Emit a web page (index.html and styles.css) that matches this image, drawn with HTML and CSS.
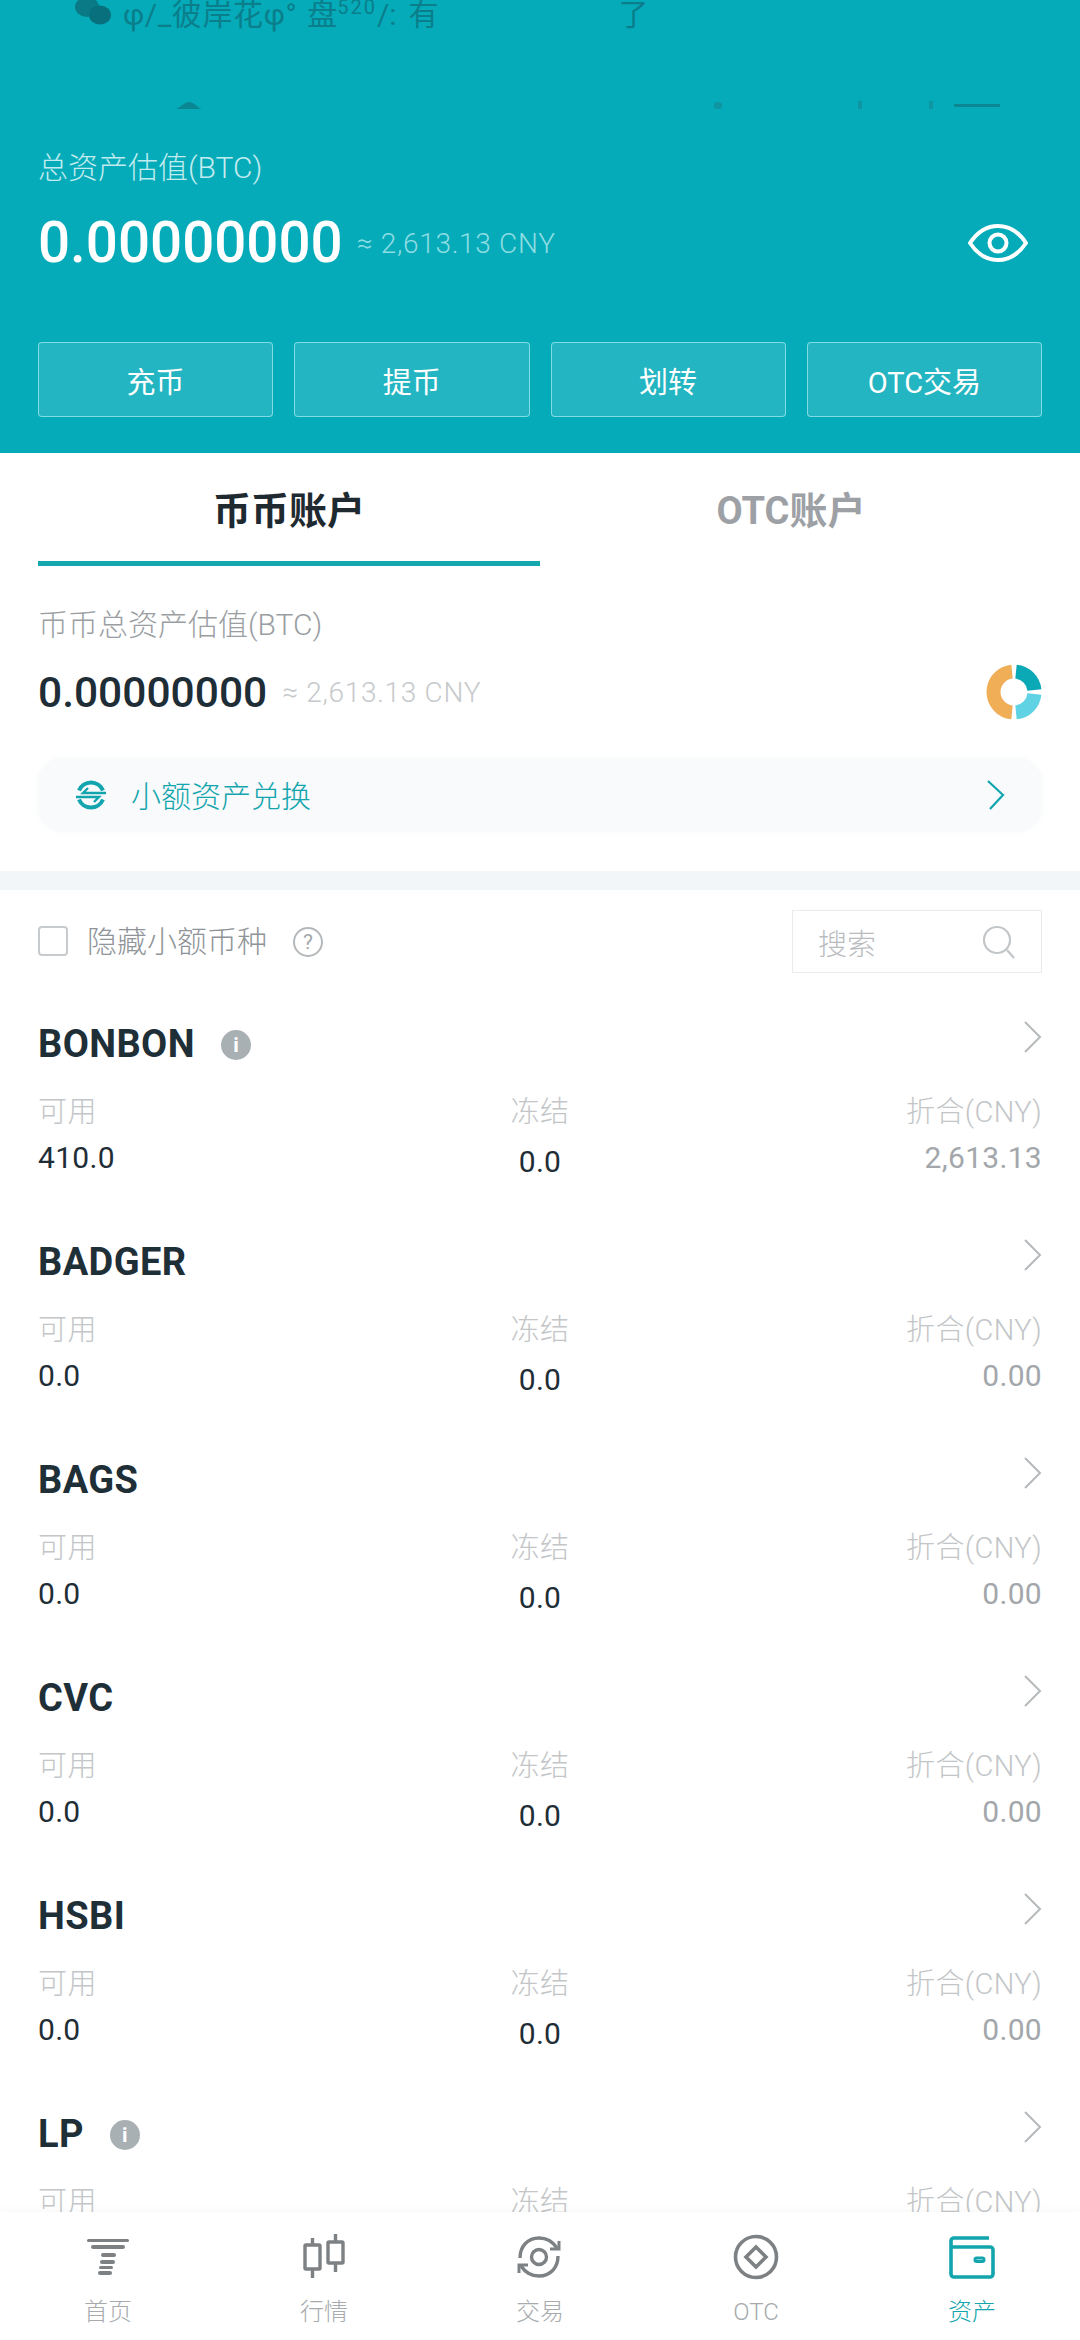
FILE: index.html
```html
<!DOCTYPE html>
<html lang="zh-CN">
<head>
  <meta charset="UTF-8">
  <meta name="viewport" content="width=device-width, initial-scale=1.0">
  <title>资产</title>
  <link rel="stylesheet" href="styles.css">
</head>
<body>
  <div class="app">
    <header class="top">
      <div class="notice">
        <svg class="wechat" width="38" height="26" viewBox="0 0 38 26">
          <ellipse cx="12" cy="7" rx="12" ry="10" fill="#0a7a86"/>
          <ellipse cx="25" cy="15" rx="11" ry="9.5" fill="#08707c"/>
        </svg>
        <span class="notice-a">φ/_彼岸花φ°</span>
        <span class="notice-b">盘<sup>520</sup>/:</span>
        <span class="notice-d">有</span>
        <span class="notice-c">了</span>
      </div>
      <svg class="smudge" width="1004" height="10" viewBox="0 0 1004 10">
        <path d="M138 9c4-1 8-7 13-7s9 6 13 7z" fill="#0b8794"/>
        <rect x="676" y="2" width="8" height="7" rx="3" fill="#0f95a2"/>
        <rect x="820" y="1" width="4" height="8" fill="#0f95a2"/>
        <rect x="891" y="1" width="4" height="8" fill="#0f95a2"/>
        <rect x="916" y="4" width="46" height="3" fill="#0b8794"/>
      </svg>
      <div class="top-label">总资产估值(BTC)</div>
      <div class="top-balance">
        <span class="top-amount">0.00000000</span>
        <span class="top-cny">≈ 2,613.13 CNY</span>
        <svg class="eye" width="62" height="40" viewBox="0 0 62 40" fill="none" stroke="#fff" stroke-width="4">
          <path d="M3 20C11 8 20 3 31 3s20 5 28 17c-8 12-17 17-28 17S11 32 3 20z" stroke-linejoin="round"/>
          <circle cx="31" cy="20" r="8.5"/>
        </svg>
      </div>
      <div class="actions">
        <a class="action">充币</a>
        <a class="action">提币</a>
        <a class="action">划转</a>
        <a class="action">OTC交易</a>
      </div>
    </header>

    <nav class="tabs">
      <div class="tab active">币币账户</div>
      <div class="tab">OTC账户</div>
    </nav>

    <section class="summary">
      <div class="summary-label">币币总资产估值(BTC)</div>
      <div class="summary-balance">
        <span class="summary-amount">0.00000000</span>
        <span class="summary-cny">≈ 2,613.13 CNY</span>
        <svg class="donut" width="56" height="56" viewBox="0 0 56 56" fill="none" stroke-width="14">
          <path d="M26 7.6A20.5 20.5 0 0 0 26 48.4" stroke="#f0ae57"/>
          <path d="M30 7.6A20.5 20.5 0 0 1 48.4 26" stroke="#0ba8b6"/>
          <path d="M48.4 30A20.5 20.5 0 0 1 30 48.4" stroke="#5fd3e3"/>
        </svg>
      </div>
      <div class="swap">
        <svg width="32" height="30" viewBox="0 0 32 30" fill="none" stroke="#12a5ad" stroke-width="4">
          <path d="M4 10.500A13 13 0 0 1 28 10.500"/>
          <path d="M4 19.500A13 13 0 0 0 28 19.500"/>
          <path d="M31 13H8l5-5M1 17h23l-5 5" stroke-width="2.4"/>
        </svg>
        <span class="swap-text">小额资产兑换</span>
        <svg class="swap-arrow" width="20" height="30" viewBox="0 0 20 30" fill="none" stroke="#12a5ad" stroke-width="2.2">
          <path d="M2 1l15 14L4 29"/>
        </svg>
      </div>
    </section>

    <div class="divider"></div>

    <section class="filter">
      <span class="check"></span>
      <span class="filter-text">隐藏小额币种</span>
      <span class="help">?</span>
      <div class="search">
        <span class="search-text">搜索</span>
        <svg width="34" height="34" viewBox="0 0 34 34" fill="none" stroke="#c3c6c8" stroke-width="2.2">
          <circle cx="15" cy="15" r="13"/>
          <path d="M25 25l7 8"/>
        </svg>
      </div>
    </section>

    <main class="coins" id="coins"></main>

    <footer class="tabbar">
      <div class="nav-item">
        <svg width="48" height="48" viewBox="0 0 48 48" fill="#7d8184">
          <rect x="3" y="6" width="42" height="3" rx="1.5"/>
          <rect x="7" y="12" width="34" height="4" rx="2"/>
          <rect x="17" y="20" width="15" height="4" rx="2"/>
          <rect x="16" y="27" width="15" height="4" rx="2"/>
          <rect x="15" y="33" width="14" height="3" rx="1.5"/>
          <rect x="14" y="38" width="14" height="4" rx="2"/>
        </svg>
        <span>首页</span>
      </div>
      <div class="nav-item">
        <svg width="48" height="48" viewBox="0 0 48 48" fill="none" stroke="#7d8184" stroke-width="3.4">
          <rect x="5" y="12" width="15" height="24" rx="1"/>
          <path d="M12.500 5v7M12.500 36v9"/>
          <rect x="28" y="9" width="15" height="21" rx="1"/>
          <path d="M35.500 1v8M35.500 30v9"/>
        </svg>
        <span>行情</span>
      </div>
      <div class="nav-item">
        <svg width="48" height="48" viewBox="0 0 48 48" fill="none" stroke="#7d8184" stroke-width="3.4">
          <circle cx="23" cy="24" r="7.500"/>
          <path d="M4 25C4 13 12 5 23 5c8 0 14 4 18 10"/>
          <path d="M42 23c0 12-8 20-19 20-8 0-14-4-18-10"/>
          <path d="M43 8v8h-9M3 40v-8h9" stroke-width="3"/>
        </svg>
        <span>交易</span>
      </div>
      <div class="nav-item">
        <svg width="48" height="48" viewBox="0 0 48 48" fill="none" stroke="#7d8184" stroke-width="3.6">
          <circle cx="24" cy="24" r="20.500"/>
          <path d="M24 14l10 10-10 10-10-10z"/>
        </svg>
        <span>OTC</span>
      </div>
      <div class="nav-item on">
        <svg width="48" height="48" viewBox="0 0 48 48" fill="none" stroke="#12a5ad" stroke-width="3.6">
          <path d="M41 5H6a3 3 0 0 0-3 3v33a3 3 0 0 0 3 3h36a3 3 0 0 0 3-3V17a3 3 0 0 0-3-3H3"/>
          <rect x="27" y="25" width="9" height="3.500" rx="1.700" stroke-width="3"/>
        </svg>
        <span>资产</span>
      </div>
    </footer>
  </div>

  <script src="coins.js"></script>
</body>
</html>
```

FILE: coins.js
```js
// the last row runs under the tab bar, only its labels show
const coins = [
  { name: 'BONBON', info: true, free: '410.0', frozen: '0.0', cny: '2,613.13' },
  { name: 'BADGER', free: '0.0', frozen: '0.0', cny: '0.00' },
  { name: 'BAGS', free: '0.0', frozen: '0.0', cny: '0.00' },
  { name: 'CVC', free: '0.0', frozen: '0.0', cny: '0.00' },
  { name: 'HSBI', free: '0.0', frozen: '0.0', cny: '0.00' },
  { name: 'LP', info: true, free: '', frozen: '', cny: '' }
];

document.getElementById('coins').innerHTML = coins.map(c => `
  <article class="coin">
    <div class="coin-head">
      <span class="coin-name">${c.name}</span>
      ${c.info ? '<span class="info">i</span>' : ''}
      <svg class="coin-arrow" width="20" height="32" viewBox="0 0 20 32" fill="none" stroke="#b6b9bb" stroke-width="2">
        <path d="M3 1l15 15L3 31"/>
      </svg>
    </div>
    <div class="stats">
      <div class="stat">
        <div class="stat-label">可用</div>
        <div class="stat-value">${c.free}</div>
      </div>
      <div class="stat middle">
        <div class="stat-label">冻结</div>
        <div class="stat-value">${c.frozen}</div>
      </div>
      <div class="stat right">
        <div class="stat-label">折合(CNY)</div>
        <div class="stat-value">${c.cny}</div>
      </div>
    </div>
  </article>
`).join('');
```

FILE: styles.css
```css
* {
  box-sizing: border-box;
}

body {
  margin: 0;
  font-family: Roboto, "Noto Sans CJK SC", sans-serif;
  background-color: #fff;
  color: #1f2d36;
}

.app {
  width: 1080px;
  height: 2340px;
  display: flex;
  flex-direction: column;
  overflow: hidden;
}

.top {
  height: 453px;
  flex: none;
  padding: 0 38px;
  background-color: #05abb9;
  color: #fff;
}

.notice {
  height: 34px;
  display: flex;
  align-items: flex-start;
  padding-left: 37px;
  font-size: 30px;
  line-height: 30px;
  color: #0b7e8b;
  white-space: nowrap;
}

.notice-a {
  margin-left: 10px;
  letter-spacing: 0.6px;
}

.notice-b {
  margin-left: 10px;
}

.notice-b sup {
  font-size: 20px;
  line-height: 0;
  letter-spacing: 2px;
}

.notice-d {
  margin-left: 12px;
}

.notice-c {
  margin-left: 180px;
}

.smudge {
  display: block;
  margin-top: 66px;
}

.top-label {
  margin-top: 39px;
  font-size: 30px;
  font-weight: 300;
  line-height: 38px;
  color: #c2ecef;
}

.top-balance {
  margin-top: 26px;
  height: 60px;
  display: flex;
  align-items: center;
}

.top-amount {
  font-size: 56.5px;
  font-weight: 500;
}

.top-cny {
  margin-left: 14px;
  font-size: 28px;
  font-weight: 300;
  letter-spacing: 0.7px;
  color: #8edde3;
}

.eye {
  margin-left: auto;
  margin-right: 13px;
}

.actions {
  margin-top: 69px;
  display: grid;
  grid-template-columns: repeat(4, 1fr);
  gap: 21px;
}

.action {
  height: 75px;
  display: flex;
  align-items: center;
  justify-content: center;
  background-color: rgba(255, 255, 255, 0.12);
  border: 1px solid rgba(170, 235, 240, 0.7);
  border-radius: 4px;
  font-size: 29px;
}

.tabs {
  height: 113px;
  flex: none;
  display: grid;
  grid-template-columns: 1fr 1fr;
  padding: 0 38px;
}

.tab {
  padding-top: 32px;
  text-align: center;
  font-size: 38px;
  font-weight: 700;
  line-height: 52px;
  color: #9da1a5;
}

.tab.active {
  color: #1f2a30;
  border-bottom: 5px solid #14a7ae;
}

.summary {
  height: 305px;
  flex: none;
  padding: 0 38px;
}

.summary-label {
  margin-top: 40px;
  font-size: 30px;
  font-weight: 300;
  line-height: 38px;
  color: #9a9ea2;
}

.summary-balance {
  height: 56px;
  margin-top: 20px;
  display: flex;
  align-items: center;
}

.summary-amount {
  font-size: 42.5px;
  font-weight: 500;
  color: #1f2d36;
}

.summary-cny {
  margin-left: 15px;
  font-size: 28px;
  font-weight: 300;
  letter-spacing: 0.7px;
  color: #c6c9cb;
}

.donut {
  margin-left: auto;
}

.swap {
  height: 74px;
  margin-top: 38px;
  display: flex;
  align-items: center;
  padding: 0 36px 0 37px;
  background-color: #f8fafc;
  border-radius: 24px;
  box-shadow: 0 0 8px #f8fafc;
}

.swap-text {
  margin-left: 24px;
  padding-bottom: 2px;
  font-size: 30px;
  font-weight: 300;
  color: #12a5ad;
}

.swap-arrow {
  margin-left: auto;
}

.divider {
  height: 19px;
  flex: none;
  background-color: #f3f6f8;
}

.filter {
  height: 87px;
  flex: none;
  display: flex;
  align-items: flex-start;
  padding: 20px 38px 0;
}

.check {
  width: 30px;
  height: 30px;
  margin-top: 16px;
  border: 2px solid #c8cbcd;
  border-radius: 4px;
}

.filter-text {
  margin: 12px 0 0 19px;
  font-size: 30px;
  font-weight: 300;
  line-height: 40px;
  color: #8f9498;
}

.help {
  width: 30px;
  height: 30px;
  margin: 17px 0 0 26px;
  border: 2px solid #b4b8ba;
  border-radius: 50%;
  text-align: center;
  font-size: 21px;
  line-height: 26px;
  color: #a4a8ab;
}

.search {
  width: 250px;
  height: 63px;
  margin-left: auto;
  display: flex;
  align-items: center;
  justify-content: space-between;
  padding: 0 25px;
  border: 1px solid #e9ebed;
}

.search-text {
  font-size: 29px;
  font-weight: 300;
  color: #b9bcbf;
}

.coins {
  flex: 1;
  min-height: 0;
  overflow: hidden;
}

.coin {
  height: 218px;
  padding: 44px 38px 0;
}

.coin-head {
  height: 44px;
  display: flex;
  align-items: center;
}

.coin-name {
  padding-top: 2px;
  font-size: 38px;
  font-weight: 700;
  line-height: 44px;
  letter-spacing: 0.4px;
  color: #1f2f38;
}

.info {
  width: 30px;
  height: 30px;
  margin: 4px 0 0 26px;
  background-color: #a9b0b4;
  border-radius: 50%;
  text-align: center;
  font-size: 21px;
  font-weight: 700;
  line-height: 30px;
  color: #fff;
}

.coin-arrow {
  margin: -12px 0 0 auto;
}

.stats {
  margin-top: 29px;
  display: grid;
  grid-template-columns: 1fr auto 1fr;
}

.stat-label {
  font-size: 29px;
  font-weight: 300;
  line-height: 36px;
  letter-spacing: 0.4px;
  color: #c3c6c8;
}

.stat-value {
  min-height: 36px;
  margin-top: 10px;
  font-size: 30px;
  line-height: 36px;
  letter-spacing: 0.3px;
  color: #1f2d36;
}

.middle {
  text-align: center;
}

.middle .stat-value {
  margin-top: 14px;
}

.right {
  text-align: right;
}

.right .stat-value {
  color: #a3a7ab;
}

.tabbar {
  height: 128px;
  flex: none;
  display: grid;
  grid-template-columns: repeat(5, 1fr);
  padding-top: 21px;
  background-color: #fff;
  box-shadow: 0 -2px 8px rgba(0, 0, 0, 0.03);
  position: relative;
}

.nav-item {
  display: flex;
  flex-direction: column;
  align-items: center;
  font-size: 24px;
  font-weight: 300;
  line-height: 34px;
  color: #a7abae;
}

.nav-item svg {
  margin-bottom: 14px;
}

.nav-item.on {
  color: #12a5ad;
}
```
